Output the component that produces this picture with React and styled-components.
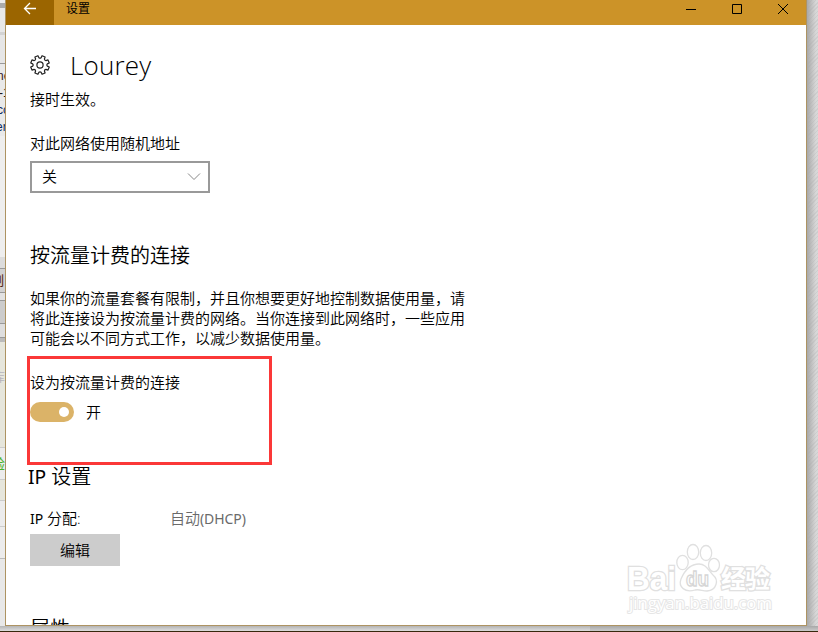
import React from "react";
import styled, { createGlobalStyle } from "styled-components";

const GlobalStyle = createGlobalStyle`
  * { box-sizing: border-box; }
  body { margin: 0; overflow: hidden; background: #d0d0d0; }
`;

const Desktop = styled.div`
  position: relative;
  display: grid;
  grid-template-columns: 5px 802px 11px;
  grid-template-rows: 626px 5px 1px;
  width: 818px;
  height: 632px;
  overflow: hidden;
  color: #000;
  font-family: "Open Sans", "Noto Sans CJK SC", sans-serif;
  font-weight: 350;
`;

const Behind = styled.div`
  display: flex;
  flex-direction: column;
  overflow: hidden;
  background: #e9e9e9;
`;

const Strip = styled.div`
  flex: none;
  height: ${(p) => p.$h}px;
  background: ${(p) => p.$bg};
  color: ${(p) => p.$color || "#111"};
  border-bottom: ${(p) => (p.$line ? `1px solid ${p.$line}` : "none")};
  font: ${(p) => p.$size || 12}px / ${(p) => p.$h}px "Liberation Sans", "Noto Sans CJK SC", sans-serif;
  white-space: nowrap;
  text-indent: ${(p) => p.$shift || 0}px;
  overflow: hidden;
`;

const RightEdge = styled.div`
  background: linear-gradient(90deg, #a9a9a9, rgba(205, 205, 205, 0) 9px),
    repeating-linear-gradient(135deg, #cdcdcd 0 1px, #d8d8d8 1px 3px);
`;

const BottomEdge = styled.div`
  grid-column: 1 / -1;
  display: flex;
`;

const Taskbar = styled.div`
  grid-column: 1 / -1;
  background: #38280d;
`;

const Shade = styled.div`
  width: ${(p) => p.$w}px;
  background: ${(p) => p.$bg};
`;

const Window = styled.main`
  display: flex;
  flex-direction: column;
  background: #fff;
  border: solid #ad9362;
  border-width: 0 1px 1px;
  overflow: hidden;
`;

const TitleBar = styled.header`
  flex: none;
  display: flex;
  height: 25px;
  background: #cc9328;
`;

const BackButton = styled.button`
  display: flex;
  align-items: flex-start;
  width: 48px;
  padding: 1px 0 0 17px;
  border: 0;
  background: #9b6500;
`;

const WindowTitle = styled.div`
  flex: 1;
  padding-left: 12px;
  font-size: 12px;
  font-weight: 400;
  line-height: 17px;
`;

const CaptionButton = styled.button`
  display: flex;
  align-items: flex-start;
  justify-content: center;
  width: 46px;
  padding: 3px 0 0;
  border: 0;
  background: none;
`;

const Content = styled.div`
  flex: 1;
  padding-left: 24px;
  overflow: hidden;
`;

const PageHeader = styled.div`
  display: flex;
  align-items: center;
  gap: 20px;
  height: 40px;
  margin-top: 20px;
`;

const PageTitle = styled.h1`
  margin: 0;
  font-size: 26px;
  font-weight: 300;
  line-height: 40px;
  letter-spacing: 0.2px;
`;

const Text = styled.p`
  width: 450px;
  margin: ${(p) => p.$top || 0}px 0 0;
  font-size: 15px;
  line-height: 20px;
  white-space: nowrap;
`;

const Select = styled.div`
  display: flex;
  align-items: center;
  justify-content: space-between;
  width: 180px;
  height: 32px;
  margin-top: 8px;
  padding: 0 7px 2px 10px;
  border: 2px solid #999;
  font-size: 15px;
  line-height: 26px;
  svg { margin-top: 1px; }
`;

const Heading = styled.h2`
  margin: ${(p) => p.$top}px 0 0 ${(p) => p.$left || 0}px;
  font-size: 20px;
  font-weight: 350;
  line-height: 28px;
`;

const Latin = styled.span`
  font-family: "Noto Sans", "Open Sans", sans-serif;
  font-weight: 400;
  font-size: ${(p) => p.$size || "0.96em"};
  letter-spacing: ${(p) => p.$track || 0}px;
`;

const Highlight = styled.section`
  width: 245px;
  height: 109px;
  margin: 8px 0 0 -3px;
  padding-top: 13px;
  border: 3px solid #fb3838;
`;

const ToggleRow = styled.div`
  display: flex;
  gap: 12px;
  align-items: center;
  height: 20px;
  margin-top: 10px;
  font-size: 15px;
  line-height: 20px;
`;

const ToggleLabel = styled.span`
  padding-bottom: 1px;
`;

const Toggle = styled.div`
  display: flex;
  justify-content: flex-end;
  align-items: center;
  width: 44px;
  height: 20px;
  padding-right: 5px;
  border-radius: 10px;
  background: #dbb368;
`;

const Knob = styled.div`
  width: 10px;
  height: 10px;
  border-radius: 50%;
  background: #fff;
`;

const Field = styled.div`
  display: grid;
  grid-template-columns: 140px 1fr;
  height: 20px;
  margin-top: 17px;
  font-size: 15px;
  line-height: 20px;
`;

const FieldValue = styled.div`
  color: #6a6a6a;
`;

const EditButton = styled.button`
  display: block;
  width: 90px;
  height: 32px;
  margin-top: 6px;
  padding: 0;
  border: 0;
  background: #ccc;
  color: #000;
  font: 350 15px / 32px "Noto Sans CJK SC", sans-serif;
`;

const Watermark = styled.svg`
  position: absolute;
  left: 620px;
  top: 536px;
`;

const teeth = Array.from({ length: 8 }, (_, i) => i * 45 + 22.5);

const Gear = () => {
  const pt = (r, deg) => {
    const a = (deg * Math.PI) / 180;
    return `${(10 + r * Math.cos(a)).toFixed(2)} ${(10 + r * Math.sin(a)).toFixed(2)}`;
  };
  const d = teeth
    .map((t, i) => `${i ? "L" : "M"}${pt(7.4, t - 14)}L${pt(9.5, t - 10)}L${pt(9.5, t + 10)}L${pt(7.4, t + 14)}Q${pt(6.4, t + 22.5)} ${pt(7.4, t + 31)}`)
    .join("");
  return (
    <svg width="20" height="20" viewBox="0 0 20 20" fill="none" stroke="#222" strokeWidth="1.2" strokeLinejoin="round">
      <path d={d + "Z"} />
      <circle cx="10" cy="10" r="3.1" />
    </svg>
  );
};

export default function App() {
  return (
    <>
      <GlobalStyle />
      <Desktop>
        <Behind>
          <Strip $h={3} $bg="#ededed" />
          <Strip $h={5} $bg="#aaa" />
          <Strip $h={24} $bg="#e8e8e8" />
          <Strip $h={3} $bg="#d3d3d3" />
          <Strip $h={29} $bg="#e6e6e6" $line="#999" />
          <Strip $h={4} $bg="#e9e9e9" />
          <Strip $h={17} $bg="#e9e9e9" $shift={-3} $color="#35192b">ne</Strip>
          <Strip $h={17} $bg="#e9e9e9" $shift={-1}>-1</Strip>
          <Strip $h={17} $bg="#e9e9e9" $shift={-3} $color="#092c62">cc</Strip>
          <Strip $h={17} $bg="#e9e9e9" $shift={-4} $color="#092c62">er</Strip>
          <Strip $h={121} $bg="#eee" />
          <Strip $h={12} $bg="#dcdcdc" $line="#999" />
          <Strip $h={24} $bg="#d2d2d2" $line="#999" $shift={-9} $size={13} $color="#52220d">制</Strip>
          <Strip $h={8} $bg="#e2e2e2" $line="#999" />
          <Strip $h={23} $bg="#ccc" $line="#999" />
          <Strip $h={14} $bg="#dedede" $line="#999" />
          <Strip $h={4} $bg="#bbb" />
          <Strip $h={26} $bg="#e6e6dc" />
          <Strip $h={20} $bg="#e6e6dc" $shift={-7} $size={12} $color="#b7b5bd">库</Strip>
          <Strip $h={60} $bg="#e6e6dc" $line="#ccc" />
          <Strip $h={32} $bg="#ececec" $line="#ccc" $shift={-9} $size={14} $color="#49b52c">验</Strip>
          <Strip $h={21} $bg="#e6e6dc" $line="#ccc" />
          <Strip $h={26} $bg="#ececec" $line="#ccc" />
          <Strip $h={32} $bg="#ececec" $line="#bbb" />
          <Strip $h={67} $bg="#e8e8e8" />
        </Behind>

        <Window>
          <TitleBar>
            <BackButton aria-label="返回">
              <svg width="14" height="14" viewBox="0 0 14 14" fill="none" stroke="#fff" strokeWidth="1.3">
                <path d="M13 7.5H1.5M7 2L1.5 7.5L7 13" />
              </svg>
            </BackButton>
            <WindowTitle>设置</WindowTitle>
            <CaptionButton aria-label="最小化">
              <svg width="12" height="12" stroke="#000" fill="none"><path d="M1 6.5H11" /></svg>
            </CaptionButton>
            <CaptionButton aria-label="最大化">
              <svg width="12" height="12" stroke="#000" fill="none"><path d="M1.5 1.5H10.5V10.5H1.5Z" /></svg>
            </CaptionButton>
            <CaptionButton aria-label="关闭">
              <svg width="12" height="12" stroke="#000" fill="none"><path d="M1 1L11 11M11 1L1 11" /></svg>
            </CaptionButton>
          </TitleBar>

          <Content>
            <PageHeader>
              <Gear />
              <PageTitle>Lourey</PageTitle>
            </PageHeader>
            <Text $top={4}>接时生效。</Text>
            <Text $top={24}>对此网络使用随机地址</Text>
            <Select>
              关
              <svg width="14" height="9" viewBox="0 0 14 9" fill="none" stroke="#888"><path d="M1 1.5L7 7.5L13 1.5" /></svg>
            </Select>

            <Heading $top={49}>按流量计费的连接</Heading>
            <Text $top={18}>
              如果你的流量套餐有限制，并且你想要更好地控制数据使用量，请
              <br />
              将此连接设为按流量计费的网络。当你连接到此网络时，一些应用
              <br />
              可能会以不同方式工作，以减少数据使用量。
            </Text>

            <Highlight>
              <Text>设为按流量计费的连接</Text>
              <ToggleRow>
                <Toggle><Knob /></Toggle>
                <ToggleLabel>开</ToggleLabel>
              </ToggleRow>
            </Highlight>

            <Heading $top={-2} $left={-2}><Latin>IP</Latin> 设置</Heading>
            <Field>
              <div><Latin $size="14px">IP</Latin> 分配:</div>
              <FieldValue>自动<Latin $size="14px" $track={-0.1}>(DHCP)</Latin></FieldValue>
            </Field>
            <EditButton>编辑</EditButton>
            <Heading $top={49}>属性</Heading>
          </Content>
        </Window>

        <RightEdge />
        <BottomEdge>
          <Shade $w={590} $bg="linear-gradient(#b4b4b4, #dedede)" />
          <Shade $w={228} $bg="linear-gradient(#a8a8a8, #cacaca)" />
        </BottomEdge>
        <Taskbar />

        <Watermark width="160" height="84" fill="#fff" stroke="#e0e0e0" strokeWidth="1.3">
          <g fontFamily="Liberation Sans, sans-serif" fontWeight="700" paintOrder="stroke" strokeWidth="2.6">
            <text x="7" y="54" fontSize="33" textLength="49" lengthAdjust="spacingAndGlyphs">Bai</text>
            <text x="101" y="52" fontSize="25" fontFamily="Noto Sans CJK SC, sans-serif" textLength="49">经验</text>
          </g>
          <ellipse cx="62.5" cy="26.5" rx="5.7" ry="7.2" />
          <ellipse cx="73" cy="16" rx="5.7" ry="7.5" />
          <ellipse cx="86" cy="17" rx="5.7" ry="7.5" />
          <ellipse cx="94" cy="29" rx="5.5" ry="6.7" />
          <path d="M79 28C86 28 88 34 93 39C99 44 97 54 87 55C82 55 80 53 75 54C65 57 58 51 61 43C64 36 70 28 79 28Z" />
          <text x="66" y="50" fontSize="20" fontWeight="700" fontFamily="Liberation Sans, sans-serif" stroke="#d6d6d6" textLength="23" lengthAdjust="spacingAndGlyphs">du</text>
          <text x="9" y="73" fontSize="17" fontFamily="Open Sans, sans-serif" fontWeight="400" stroke="#e6e6e6" strokeWidth="2" paintOrder="stroke" textLength="143" lengthAdjust="spacingAndGlyphs">jingyan.baidu.com</text>
        </Watermark>
      </Desktop>
    </>
  );
}
